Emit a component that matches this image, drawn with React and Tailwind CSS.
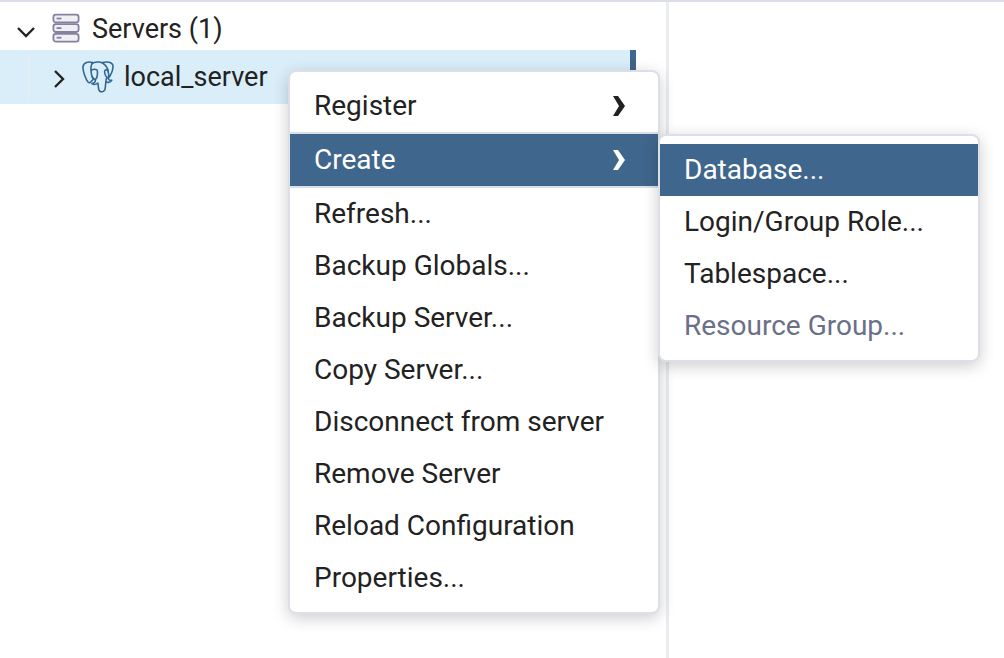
import { useState } from "react";

const actions = [
  "Refresh...",
  "Backup Globals...",
  "Backup Server...",
  "Copy Server...",
  "Disconnect from server",
  "Remove Server",
  "Reload Configuration",
  "Properties...",
];

function ServersIcon() {
  return (
    <svg aria-hidden="true" className="h-8 w-7" viewBox="0 0 28 32" fill="#f0eff4" stroke="#85829f" strokeWidth="1.8">
      {[1.6, 11.2, 20.8].map((y) => (
        <g key={y}>
          <rect x="1.4" y={y} width="25.2" height="7.8" rx="2.4" />
          <path d={`M4.6 ${y + 3.9}h4.800`} />
        </g>
      ))}
    </svg>
  );
}

function ElephantIcon() {
  return (
    <svg aria-hidden="true" className="size-8" viewBox="0 0 32 32" fill="none" stroke="#336791" strokeWidth="1.6" strokeLinecap="round" strokeLinejoin="round">
      <path d="M10.500 1.600C6.500 .2 1.800 1.200 1 5.500C.6 10 3.800 18.500 6.200 21.300C7.600 22.700 9 20.600 11 18.500" />
      <path d="M10 2.600C12.500 .6 18 .4 20.500 2C23.800 4 25.800 8 26.200 10.500" />
      <path d="M20.500 1.600C25 .2 30.800 1 31 5C31.200 9.500 28.500 14.500 26.400 17.300C26.200 19.200 28 19.600 29.800 19.200C28.800 21.200 26 21.800 24.200 21" />
      <path d="M10 2.600C8.200 5.500 9 11 9.600 14C10 16.500 11.600 18.200 13.300 18.800C14.600 17.400 15.400 15.800 15.400 13.500C15.400 11.500 15.800 9.800 15 9C13.400 8 10.800 8.400 9.400 9.200" />
      <path d="M13.300 18.800C13.600 20.500 12.500 22.400 9.800 22.400C12 24.200 14.600 23.200 15.800 22C16.600 24 15.800 28.600 17.800 30.300C19.600 31.400 22.400 30.400 23 28.400C23.600 25.600 23.600 21.500 24.300 17.600" />
      <path d="M26 9.400C24 8.200 22.400 9.200 22.600 10.800C22.800 13.500 23.600 16 26.200 17.300C27 14.500 26.800 12 26 9.400" />
    </svg>
  );
}

function SubmenuArrow() {
  return (
    <svg aria-hidden="true" className="h-5 w-3" viewBox="0 0 12 20" fill="currentColor">
      <path d="M0 0h5l7 10-7 10H0l6-10z" />
    </svg>
  );
}

function Menu({ label, children }) {
  return (
    <div role="menu" aria-label={label} className="w-full rounded-lg border-2 border-[#dddfe6] bg-white py-2 shadow-[0_4px_16px_rgba(0,0,0,0.2)]">
      {children}
    </div>
  );
}

function Item({ children, active, disabled, submenu, onHover }) {
  const colour = active ? "bg-[#3f668c] text-white" : "bg-white text-[#222222]";
  return (
    <button
      type="button"
      role="menuitem"
      disabled={disabled}
      aria-haspopup={submenu ? "menu" : undefined}
      aria-expanded={submenu ? Boolean(active) : undefined}
      onMouseEnter={onHover}
      className={`flex h-13 w-full items-center justify-between pr-[33px] pl-6 text-left text-[28px] leading-8 whitespace-nowrap disabled:text-[#6b6f88] ${colour}`}
    >
      {children}
      {submenu && <SubmenuArrow />}
    </button>
  );
}

export default function App() {
  const [open, setOpen] = useState("Create");
  return (
    <div className="relative flex min-h-screen border-t-2 border-[#dddfe6] bg-white font-['Roboto',sans-serif] text-[#222222]">
      <aside className="w-2/3 border-r-3 border-[#ebecf1]">
        <ul role="tree" aria-label="Object explorer" className="mr-[30px] text-[27px] leading-8">
          <li role="treeitem" aria-expanded="true">
            <div className="flex h-12 items-center pt-1.5 pl-4">
              <svg aria-hidden="true" className="mt-1.5 mr-4 size-5" viewBox="0 0 20 20" fill="none" stroke="#222222" strokeWidth="2.4">
                <path d="m2 6 8 8 8-8" />
              </svg>
              <ServersIcon />
              <span className="ml-3">Servers (1)</span>
            </div>
            <ul role="group">
              <li role="treeitem" aria-expanded="false" aria-selected="true" className="flex h-[54px] items-center border-r-6 border-[#3f668c] bg-[#daeefa] pl-7">
                <span className="h-12 w-0.5 bg-[#e8ebf3]" />
                <svg aria-hidden="true" className="mt-1 mr-3 ml-5 size-5" viewBox="0 0 20 20" fill="none" stroke="#222222" strokeWidth="2.4">
                  <path d="m5 2 8 8-8 8" />
                </svg>
                <ElephantIcon />
                <span className="ml-2.5">local_server</span>
              </li>
            </ul>
          </li>
        </ul>
      </aside>
      <main className="flex-1" />

      <div className="absolute top-17 left-72 w-[372px]">
        <Menu label="Server actions">
          <Item submenu active={open === "Register"} onHover={() => setOpen("Register")}>Register</Item>
          <div className="border-y-2 border-[#dddfe6]">
            <Item submenu active={open === "Create"} onHover={() => setOpen("Create")}>Create</Item>
          </div>
          {actions.map((name) => (
            <Item key={name}>{name}</Item>
          ))}
        </Menu>
        {open === "Create" && (
          <div className="absolute top-16 left-[370px] w-[322px]">
            <Menu label="Create">
              <Item active>Database...</Item>
              <Item>Login/Group Role...</Item>
              <Item>Tablespace...</Item>
              <Item disabled>Resource Group...</Item>
            </Menu>
          </div>
        )}
      </div>
    </div>
  );
}
